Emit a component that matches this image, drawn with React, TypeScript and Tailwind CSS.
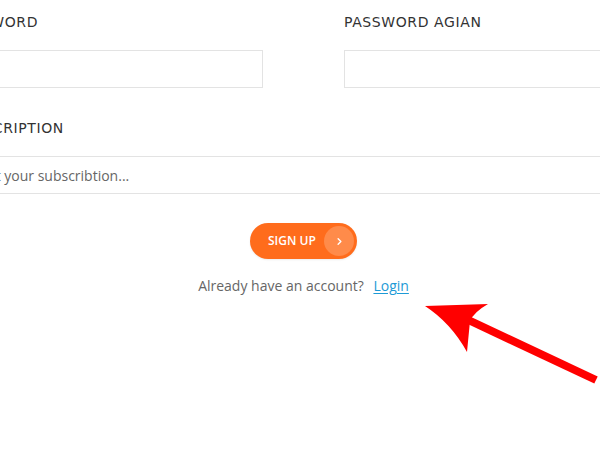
import { ChevronRight } from 'lucide-react';

const labelCls =
  "block text-[14px] font-medium tracking-[0.6px] text-[#333] uppercase [font-family:'DejaVu_Sans',sans-serif]";
const inputCls =
  "block w-full h-[38px] border border-[#e3e3e3] bg-white px-3 text-[14px] text-[#555] outline-none placeholder:text-[#666] [font-family:'Open_Sans',sans-serif]";

function Field({ label, placeholder }: { label: string; placeholder?: string }) {
  return (
    <div>
      <label className={labelCls}>{label}</label>
      <input type="text" className={`${inputCls} mt-[17px]`} placeholder={placeholder} />
    </div>
  );
}

function RedArrow() {
  return (
    <svg className="absolute left-0 top-0 pointer-events-none" width="600" height="461" viewBox="0 0 600 461">
      <line x1="462" y1="317" x2="596" y2="380" stroke="#ff0000" strokeWidth="8" />
      <path d="M425 306 L488 304 Q474 312 470 321 L467 352 Q451 323 425 306 Z" fill="#ff0000" />
    </svg>
  );
}

export default function App() {
  return (
    <div className="relative w-[600px] h-[461px] overflow-hidden bg-white">
      <div className="ml-[-47px] w-[701px] pt-[12px]">
        <div className="grid grid-cols-2 gap-x-[81px]">
          <Field label="Password" />
          <Field label="Password Agian" />
        </div>
        <div className="mt-[30px]">
          <Field label="Subscription" placeholder="Input your subscribtion..." />
        </div>
        <div className="mt-[29px] flex flex-col items-center">
          <button className="flex items-center h-[36px] w-[107px] rounded-full bg-[#ff6c1c] pl-[18px] pr-[3px] text-white shadow-[0_1px_2px_rgba(0,0,0,0.08)]">
            <span className="text-[12px] font-semibold [font-family:'Open_Sans',sans-serif]">SIGN UP</span>
            <span className="ml-auto flex size-[30px] items-center justify-center rounded-full bg-[#ff8b4a]">
              <ChevronRight className="size-[11px]" strokeWidth={3} />
            </span>
          </button>
          <p className="mt-[16px] text-[14px] text-[#666] [font-family:'Open_Sans',sans-serif]">
            Already have an account?{' '}
            <a href="#" className="ml-[6px] text-[#1d9ad6] underline underline-offset-2">
              Login
            </a>
          </p>
        </div>
      </div>
      <RedArrow />
    </div>
  );
}
